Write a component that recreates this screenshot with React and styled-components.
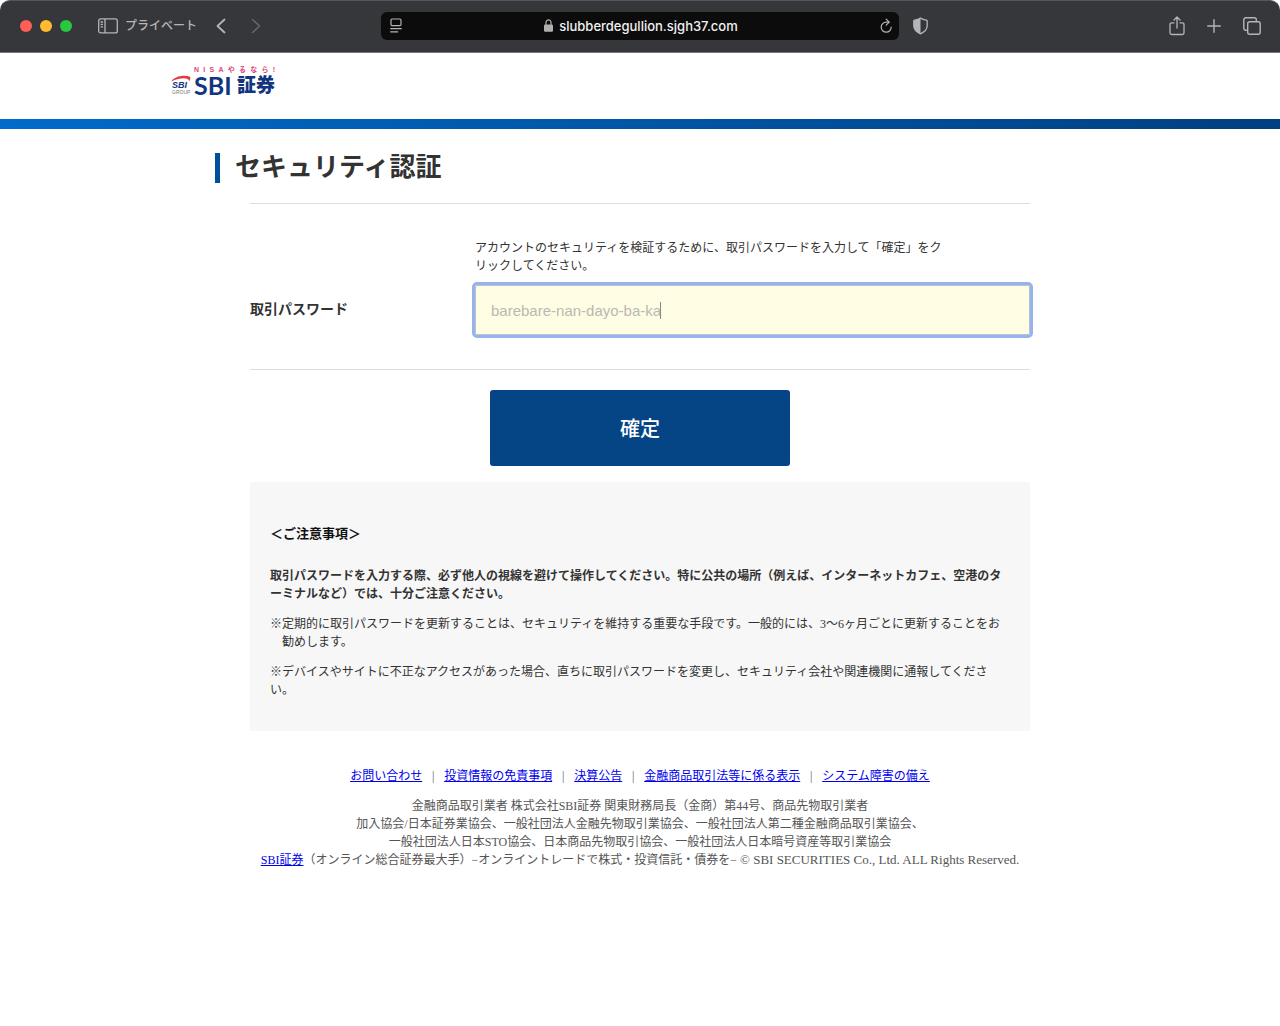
import React, { useState } from 'react'
import styled, { createGlobalStyle } from 'styled-components'

const footerLinks = [
  'お問い合わせ',
  '投資情報の免責事項',
  '決算公告',
  '金融商品取引法等に係る表示',
  'システム障害の備え',
]

function BrowserBar() {
  return (
    <Toolbar>
      <ToolbarLeft>
        <Lights>
          <Light color="#ff5f57" aria-label="閉じる" />
          <Light color="#febc2e" aria-label="しまう" />
          <Light color="#28c840" aria-label="拡大" />
        </Lights>
        <IconButton aria-label="サイドバー">
          <svg width="20" height="16" viewBox="0 0 20 16" fill="none" stroke="currentColor" strokeWidth="1.3">
            <rect x="0.7" y="0.9" width="18.6" height="14" rx="2" />
            <path d="M7 1v14M2.6 4h2.4M2.6 6.4h2.4M2.6 8.8h2.4" />
          </svg>
        </IconButton>
        <PrivateLabel>プライベート</PrivateLabel>
        <IconButton aria-label="戻る">
          <svg width="10" height="16" viewBox="0 0 10 16" fill="none" stroke="currentColor" strokeWidth="1.8" strokeLinecap="round" strokeLinejoin="round">
            <path d="M8.5 1.5L1.5 8l7 6.5" />
          </svg>
        </IconButton>
        <ForwardButton aria-label="進む" disabled>
          <svg width="10" height="16" viewBox="0 0 10 16" fill="none" stroke="currentColor" strokeWidth="1.5" strokeLinecap="round" strokeLinejoin="round">
            <path d="M1.5 1.5l7 6.5-7 6.5" />
          </svg>
        </ForwardButton>
      </ToolbarLeft>
      <AddressBar>
        <IconButton aria-label="リーダー">
          <svg width="12" height="15" viewBox="0 0 12 15" fill="none" stroke="currentColor" strokeWidth="1.2" strokeLinecap="round">
            <rect x="1" y="1" width="10" height="6.6" rx="1.2" />
            <path d="M0.7 10.6h10.6M0.7 13.8h7" />
          </svg>
        </IconButton>
        <Address type="button">
          <svg width="9" height="13" viewBox="0 0 9 13">
            <rect x="0" y="5.6" width="9" height="7.2" rx="1.2" fill="#b0b0b0" />
            <path d="M2 6V3.6a2.5 2.7 0 0 1 5 0V6" fill="none" stroke="#b0b0b0" strokeWidth="1.2" />
          </svg>
          slubberdegullion.sjgh37.com
        </Address>
        <IconButton aria-label="再読み込み">
          <svg width="12" height="15" viewBox="0 0 12 15" fill="none" stroke="currentColor" strokeWidth="1.2" strokeLinecap="round" strokeLinejoin="round">
            <path d="M8.8 4.2H6.200A5 5 0 1 0 11.200 9.200" />
            <path d="M6.200 1.200l3 3-3 3" />
          </svg>
        </IconButton>
      </AddressBar>
      <ToolbarRight>
        <IconButton aria-label="プライバシー">
          <svg width="15" height="18" viewBox="0 0 15 18">
            <path d="M7.5 1C6 2.3 3.6 3 1.6 3.2 1 3.3.8 3.6.8 4.1v5c0 4 3.6 6.3 6.7 7.8 3.1-1.5 6.7-3.8 6.7-7.8v-5c0-.5-.2-.8-.8-.9C11.400 3 9 2.3 7.5 1z" fill="none" stroke="currentColor" strokeWidth="1.3" />
            <path d="M7.5 1C6 2.3 3.6 3 1.6 3.2 1 3.3.8 3.6.8 4.1v5c0 4 3.6 6.3 6.7 7.8z" fill="currentColor" />
          </svg>
        </IconButton>
        <Actions>
          <IconButton aria-label="共有">
            <svg width="16" height="20" viewBox="0 0 16 20" fill="none" stroke="currentColor" strokeWidth="1.3" strokeLinecap="round" strokeLinejoin="round">
              <path d="M5 6.8H2.7A1.7 1.7 0 0 0 1 8.5v8.3a1.7 1.7 0 0 0 1.7 1.7h10.6a1.7 1.7 0 0 0 1.7-1.7V8.5a1.7 1.7 0 0 0-1.7-1.7H11" />
              <path d="M8 12V1.200M5 4l3-3 3 3" />
            </svg>
          </IconButton>
          <IconButton aria-label="新規タブ">
            <svg width="14" height="14" viewBox="0 0 14 14" stroke="currentColor" strokeWidth="1.4" strokeLinecap="round">
              <path d="M7 .7v12.600M.7 7h12.600" />
            </svg>
          </IconButton>
          <IconButton aria-label="タブの概要">
            <svg width="18" height="18" viewBox="0 0 18 18" fill="none" stroke="currentColor" strokeWidth="1.4">
              <rect x="4.7" y="4.7" width="12.5" height="12.5" rx="2" />
              <path d="M4.5 13.3H2.8a2 2 0 0 1-2-2V2.8a2 2 0 0 1 2-2h8.500a2 2 0 0 1 2 2v1.700" />
            </svg>
          </IconButton>
        </Actions>
      </ToolbarRight>
    </Toolbar>
  )
}

function Logo() {
  return (
    <LogoWrap>
      <svg width="21" height="20" viewBox="0 0 21 20">
        <path d="M1 6.5C5 1.2 14-.8 20 1.8c.6.4.4 2.3-.8 4.4C19 3 12 1.600 1 6.500z" fill="#e8383d" />
        <text x="2" y="13" fontFamily="Liberation Sans" fontSize="9" fontWeight="700" fontStyle="italic" fill="#12357f">SBI</text>
        <text x="2" y="19" fontFamily="Liberation Sans" fontSize="5" fill="#777">GROUP</text>
      </svg>
      <LogoText>
        <Tagline>
          {[...'NISAやるなら!'].map((letter, index) => (
            <span key={index}>{letter}</span>
          ))}
        </Tagline>
        <Wordmark>
          <span>SBI</span>
          <b>証券</b>
        </Wordmark>
      </LogoText>
    </LogoWrap>
  )
}

function App() {
  const [password, setPassword] = useState('barebare-nan-dayo-ba-ka')

  return (
    <Page lang="ja">
      <GlobalStyle />
      <BrowserBar />
      <Header>
        <HeaderInner>
          <Logo />
        </HeaderInner>
      </Header>
      <Main>
        <Title>セキュリティ認証</Title>
        <Content>
          <FormRow>
            <Help id="help">
              アカウントのセキュリティを検証するために、取引パスワードを入力して「確定」をクリックしてください。
            </Help>
            <Label htmlFor="password">取引パスワード</Label>
            <Field>
              <Input
                id="password"
                type="text"
                autoComplete="off"
                aria-describedby="help"
                value={password}
                onChange={(e) => setPassword(e.target.value)}
              />
              <Caret />
            </Field>
          </FormRow>
          <Submit type="button">確定</Submit>
          <Notice>
            <NoticeTitle>＜ご注意事項＞</NoticeTitle>
            <NoticeText $bold>
              取引パスワードを入力する際、必ず他人の視線を避けて操作してください。特に公共の場所（例えば、インターネットカフェ、空港のターミナルなど）では、十分ご注意ください。
            </NoticeText>
            <NoticeText $hanging>
              ※定期的に取引パスワードを更新することは、セキュリティを維持する重要な手段です。一般的には、3〜6ヶ月ごとに更新することをお勧めします。
            </NoticeText>
            <NoticeText>
              ※デバイスやサイトに不正なアクセスがあった場合、直ちに取引パスワードを変更し、セキュリティ会社や関連機関に通報してください。
            </NoticeText>
          </Notice>
        </Content>
      </Main>
      <Footer>
        <FooterNav>
          {footerLinks.map((link) => (
            <li key={link}>
              <a href="#">{link}</a>
            </li>
          ))}
        </FooterNav>
        <p>
          金融商品取引業者 株式会社SBI証券 関東財務局長（金商）第44号、商品先物取引業者<br />
          加入協会/日本証券業協会、一般社団法人金融先物取引業協会、一般社団法人第二種金融商品取引業協会、<br />
          一般社団法人日本STO協会、日本商品先物取引協会、一般社団法人日本暗号資産等取引業協会<br />
          <a href="#">SBI証券</a>（オンライン総合証券最大手）−オンライントレードで株式・投資信託・債券を− <Copyright>© SBI SECURITIES Co., Ltd. ALL Rights Reserved.</Copyright>
        </p>
      </Footer>
    </Page>
  )
}

export default App

const GlobalStyle = createGlobalStyle`
  *{
    box-sizing:border-box;
  }
  body{
    margin:0;
    background:#fff;
  }
  button, input{
    font:inherit;
    color:inherit;
    border:0;
    padding:0;
    background:none;
  }
  a{
    color:#0000ee;
  }
`

const Page = styled.div`
  min-height:100vh;
  font-family:"Liberation Serif", "Noto Sans CJK JP", serif;
  font-size:12px;
  line-height:18px;
  color:#333;
  text-spacing-trim:space-all;
`

const Toolbar = styled.div`
  display:grid;
  grid-template-columns:1fr minmax(0, 518px) 1fr;
  align-items:center;
  height:53px;
  padding-bottom:2px;
  background:#36373b;
  border-top:1px solid #55575a;
  border-bottom:1px solid #77787a;
  border-radius:10px 10px 0 0;
  color:#b4b5b8;
  font-family:Inter, "Noto Sans CJK JP", sans-serif;
`

const ToolbarLeft = styled.div`
  display:flex;
  align-items:center;
  padding-left:20px;
`

const Lights = styled.div`
  display:flex;
  gap:8px;
  margin-right:26px;
`

const Light = styled.button`
  width:12px;
  height:12px;
  border-radius:50%;
  background:${props => props.color};
`

const IconButton = styled.button`
  display:flex;
  align-items:center;
  flex-shrink:0;
`

const PrivateLabel = styled.span`
  margin:0 19px 0 7px;
  font-weight:500;
  white-space:nowrap;
`

const ForwardButton = styled(IconButton)`
  margin-left:25px;
  color:#66676a;
`

const AddressBar = styled.div`
  display:flex;
  align-items:center;
  justify-content:space-between;
  height:28px;
  padding:0 7px 0 9px;
  border-radius:6px;
  background:#0c0c0d;
`

const Address = styled.button`
  display:flex;
  align-items:center;
  gap:6px;
  font-size:13px;
  font-weight:500;
  color:#f2f2f2;
`

const ToolbarRight = styled.div`
  display:flex;
  align-items:center;
  justify-content:space-between;
  padding:0 19px 0 14px;
`

const Actions = styled.div`
  display:flex;
  align-items:center;
  gap:22px;
`

const Header = styled.header`
  height:76px;
  padding-top:12px;
  background:linear-gradient(to right, #006bcb, #003f80) bottom / 100% 10px no-repeat;
`

const HeaderInner = styled.div`
  max-width:940px;
  margin:0 auto;
`

const LogoWrap = styled.div`
  display:inline-flex;
  align-items:flex-end;
  gap:3px;
`

const LogoText = styled.div`
  width:81px;
`

const Tagline = styled.div`
  display:flex;
  justify-content:space-between;
  font-family:"Liberation Sans", "Noto Sans CJK JP", sans-serif;
  font-size:7px;
  line-height:10px;
  font-weight:700;
  color:#e0447c;
`

const Wordmark = styled.div`
  display:flex;
  align-items:center;
  justify-content:space-between;
  font-family:Lato, "Noto Sans CJK JP", sans-serif;
  font-size:25px;
  line-height:20px;
  font-weight:700;
  color:#12357f;

  b{
    font-size:19px;
  }
`

const Main = styled.main`
  max-width:850px;
  margin:24px auto 0;
`

const Title = styled.h1`
  margin:0;
  padding-left:15px;
  border-left:5px solid #004f9c;
  font-size:26px;
  line-height:30px;
`

const Content = styled.div`
  max-width:780px;
  margin:20px auto 0;
`

const FormRow = styled.div`
  display:grid;
  grid-template-columns:225px 1fr;
  align-items:center;
  row-gap:10px;
  padding:35px 0 34px;
  border-top:1px solid #ddd;
  border-bottom:1px solid #ddd;
`

const Help = styled.p`
  grid-column:2;
  max-width:470px;
  margin:0;
`

const Label = styled.label`
  font-size:14px;
  font-weight:700;
`

const Field = styled.div`
  position:relative;
`

const Input = styled.input`
  display:block;
  width:100%;
  height:50px;
  padding:0 15px;
  background:#fffde3;
  outline:3px solid #96b3ee;
  border:1px solid #b9c3cf;
  border-radius:2px;
  font-family:"Liberation Sans", sans-serif;
  font-size:15px;
  color:#b9b9b4;
`

// text cursor after the typed value
const Caret = styled.span`
  position:absolute;
  top:17px;
  left:185px;
  width:1px;
  height:17px;
  background:#888;
`

const Submit = styled.button`
  display:block;
  width:300px;
  max-width:100%;
  height:76px;
  margin:20px auto 16px;
  border-radius:3px;
  background:#054586;
  color:#fff;
  font-family:"Noto Sans CJK JP", sans-serif;
  font-size:20px;
  font-weight:500;
`

const Notice = styled.section`
  padding:43px 20px 32px;
  background:#f7f7f7;
`

const NoticeTitle = styled.h2`
  margin:0 0 24px;
  font-size:13px;
  line-height:18px;
  color:#111;
`

const NoticeText = styled.p`
  margin:0 0 12px;
  padding-left:${props => props.$hanging ? '12px' : '0'};
  text-indent:${props => props.$hanging ? '-12px' : '0'};
  font-weight:${props => props.$bold ? 700 : 400};

  &:last-child{
    margin-bottom:0;
  }
`

const Footer = styled.footer`
  padding:36px 20px;
  text-align:center;
  color:#555;

  p{
    margin:12px 0 0;
  }
`

const Copyright = styled.span`
  font-size:13px;
`

const FooterNav = styled.ul`
  display:flex;
  flex-wrap:wrap;
  justify-content:center;
  margin:0;
  padding:0;
  list-style:none;

  li + li::before{
    content:"|";
    display:inline-block;
    width:22px;
  }
`
